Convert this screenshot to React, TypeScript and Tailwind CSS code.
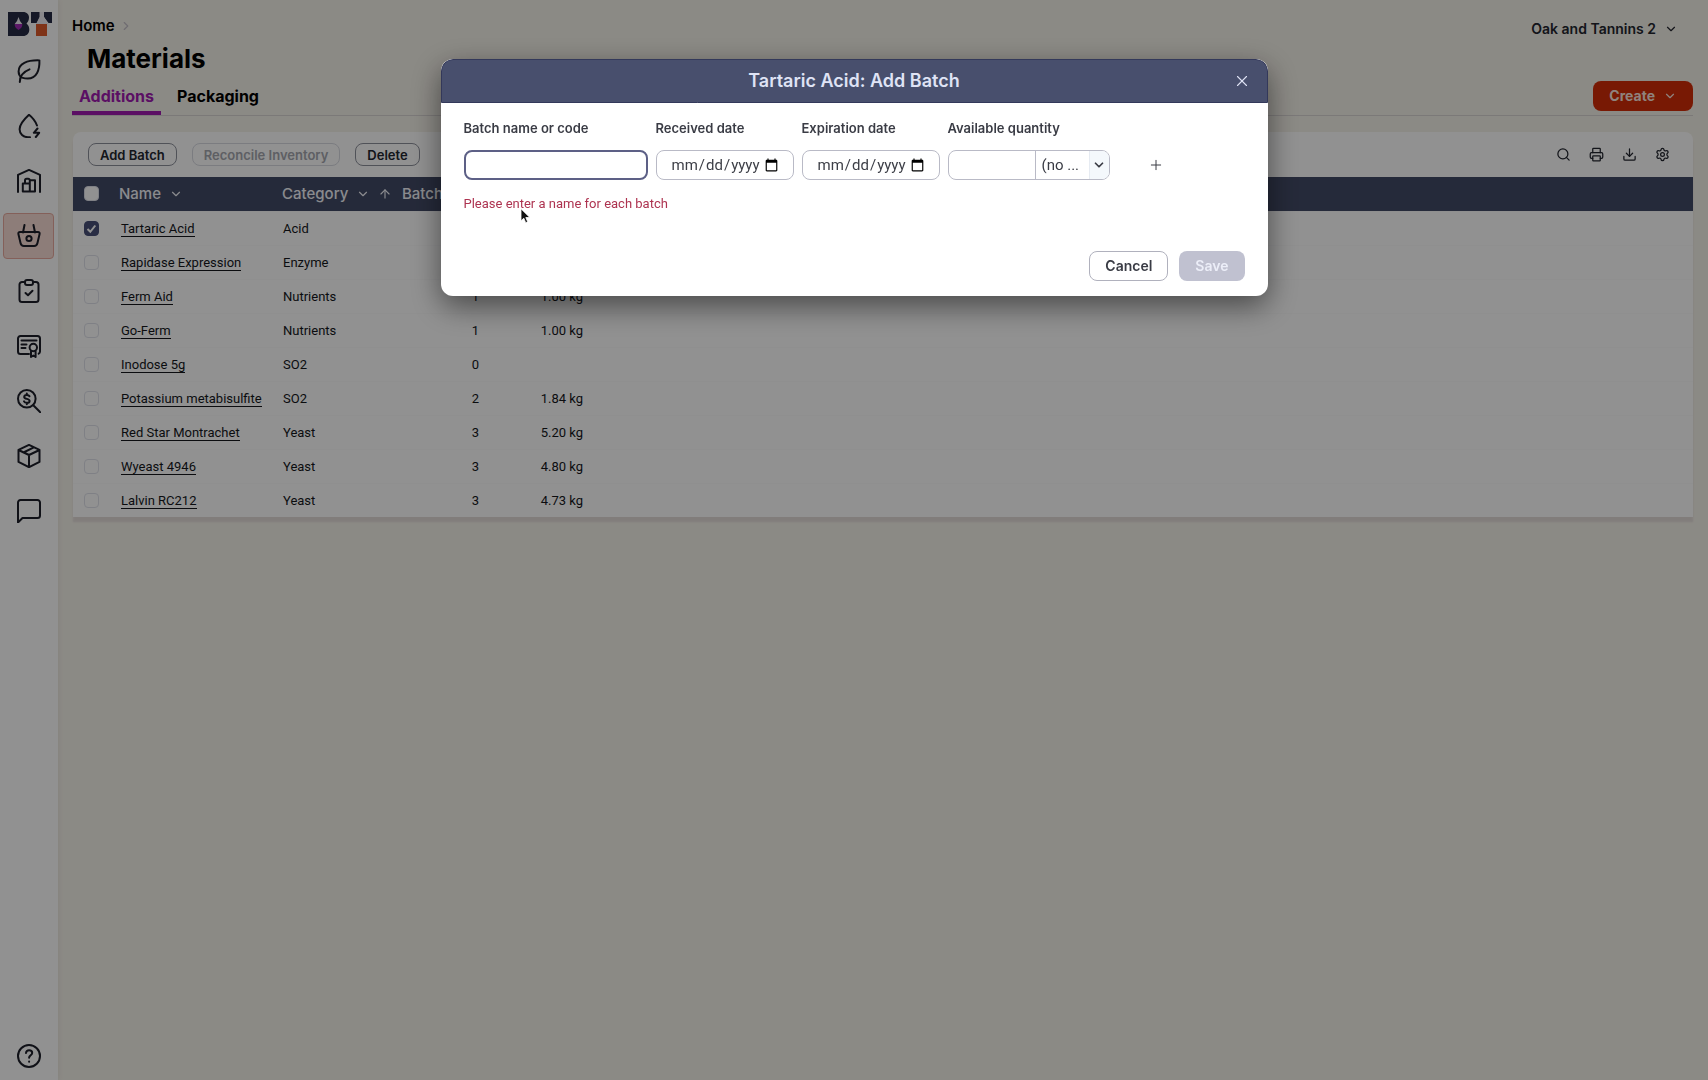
import type { ReactNode } from "react";
import { ArrowUp, ChevronDown, ChevronRight, Download, Plus, Printer, Search, Settings, X } from "lucide-react";

const iconProps = {
  width: 24,
  height: 24,
  viewBox: "0 0 24 24",
  fill: "none",
  stroke: "currentColor",
  strokeWidth: 2,
  strokeLinecap: "round" as const,
  strokeLinejoin: "round" as const,
};

const navItems: { label: string; icon: ReactNode; active?: boolean }[] = [
  {
    label: "Vineyard",
    icon: (
      <svg {...iconProps}>
        <path d="M22.4 1.4C10 1 1.6 4.8 1.6 12.4c0 2.9 1.3 4.9 3.3 6.2 6.9 2 12.5.3 15.2-4.6 2-3.8 2.5-8 2.3-12.6Z" />
        <path d="M2.8 23c0-6 3.6-10.2 9.7-12.6" />
      </svg>
    ),
  },
  {
    label: "Wine",
    icon: (
      <svg {...iconProps}>
        <path d="M20 11.5C18.5 7.5 14.5 2.8 12 .8 8.5 4 2.6 9.8 2.6 15.2c0 4.7 3.7 8 8.4 8h2" />
        <path d="m20.5 14.5-3.7 4.3h5.4l-3.4 4.2" />
      </svg>
    ),
  },
  {
    label: "Cellar",
    icon: (
      <svg {...iconProps}>
        <path d="M1 23V5.8L12 .9l11 4.9V23" />
        <path d="M5.8 22.5v-8h7v8ZM12.8 22.5V11.3H18v11.2ZM8 14.5v-3.2a1.6 1.6 0 0 1 1.6-1.6h1.6a1.6 1.6 0 0 1 1.6 1.6" />
      </svg>
    ),
  },
  {
    label: "Materials",
    active: true,
    icon: (
      <svg {...iconProps}>
        <path d="M3 8h18c1.3 0 1.9.9 1.6 2l-2.2 9.3c-.4 1.7-1.5 2.7-3.2 2.7H6.8c-1.7 0-2.8-1-3.2-2.7L1.4 10C1.1 8.9 1.7 8 3 8Z" />
        <path d="M7.5 1 6 8.5M16.5 1 18 8.5" />
        <circle cx="12" cy="14.5" r="2.6" />
      </svg>
    ),
  },
  {
    label: "Tasks",
    icon: (
      <svg {...iconProps}>
        <path d="M8 3H5a2.5 2.5 0 0 0-2.5 2.5v15A2.5 2.5 0 0 0 5 23h14a2.5 2.5 0 0 0 2.5-2.5v-15A2.5 2.5 0 0 0 19 3h-3" />
        <rect x="8" y="1" width="8" height="5" rx="2" />
        <path d="m8.5 14 2.5 2.3 4.5-4.6" />
      </svg>
    ),
  },
  {
    label: "Compliance",
    icon: (
      <svg {...iconProps}>
        <path d="M12 20H3.5A2.5 2.5 0 0 1 1 17.5v-13A2.5 2.5 0 0 1 3.5 2h17A2.5 2.5 0 0 1 23 4.500v13c0 1-.5 1.800-1.300 2.200" />
        <path d="M4.5 6.5h15M4.5 10.5h5M4.5 14h4" />
        <circle cx="16.3" cy="13.5" r="3.7" />
        <path d="M14 17.5V23l2.3-1.5 2.3 1.5v-5.5" />
      </svg>
    ),
  },
  {
    label: "Costs",
    icon: (
      <svg {...iconProps}>
        <circle cx="9.8" cy="9.8" r="8.8" />
        <path d="m16.3 16.3 7 7" />
        <path d="M12.5 7.3C12 6.3 11 6 9.8 6 8.3 6 7.2 6.7 7.2 7.9c0 2.7 5.4 1.2 5.4 4 0 1.2-1.2 1.9-2.7 1.9-1.3 0-2.4-.4-2.9-1.5M9.8 4.5V6M9.8 13.8v1.4" />
      </svg>
    ),
  },
  {
    label: "Inventory",
    icon: (
      <svg {...iconProps}>
        <path d="m12 .9 10.5 5v12L12 23.2 1.5 17.9v-12ZM12 23V11M1.5 6 12 11l10.5-5M6.5 8.5l10.3-5.2" />
      </svg>
    ),
  },
  {
    label: "Messages",
    icon: (
      <svg {...iconProps}>
        <path d="M1 23.5v-20A2.5 2.5 0 0 1 3.5 1h17A2.5 2.5 0 0 1 23 3.5v13a2.5 2.5 0 0 1-2.5 2.5h-15Z" />
      </svg>
    ),
  },
];

const rows = [
  { name: "Tartaric Acid", category: "Acid", batches: "", quantity: "", checked: true },
  { name: "Rapidase Expression", category: "Enzyme", batches: "", quantity: "" },
  { name: "Ferm Aid", category: "Nutrients", batches: "1", quantity: "1.00 kg" },
  { name: "Go-Ferm", category: "Nutrients", batches: "1", quantity: "1.00 kg" },
  { name: "Inodose 5g", category: "SO2", batches: "0", quantity: "" },
  { name: "Potassium metabisulfite", category: "SO2", batches: "2", quantity: "1.84 kg" },
  { name: "Red Star Montrachet", category: "Yeast", batches: "3", quantity: "5.20 kg" },
  { name: "Wyeast 4946", category: "Yeast", batches: "3", quantity: "4.80 kg" },
  { name: "Lalvin RC212", category: "Yeast", batches: "3", quantity: "4.73 kg" },
];

function Logo() {
  return (
    <svg width="44" height="24" viewBox="0 0 44 24">
      <path d="M0 0h15c4 0 6 2.5 6 5.5 0 2.5-1 4.5-2.5 6 1.8 1.3 2.8 3.5 2.8 6 0 4-2.5 6.5-6.3 6.5H0Z" fill="#262b45" />
      <path d="M10.5 5 12 9l2.3 3H6.7L9 9Z" fill="#f0eef5" />
      <path d="M6.7 12h7.6c.3 2.500-1.300 4.500-3.800 6-2.500-1.500-4.100-3.500-3.800-6Z" fill="#a02bb5" />
      <path d="M23 0h9v5l-3 6h-6ZM36 0h8v11h-3.500L36 5Z" fill="#262b45" />
      <path d="M31.5 0H36v5l4 7H28l3.5-7Z" fill="#f0eef5" />
      <path d="M28 12h11v12H28Z" fill="#e05a2b" />
    </svg>
  );
}

function Checkbox({ checked, label }: { checked?: boolean; label: string }) {
  return (
    <span className="relative flex size-[15px]">
      <input
        type="checkbox"
        defaultChecked={checked}
        aria-label={label}
        className="peer size-[15px] appearance-none rounded border border-[#dfe2ea] bg-white checked:border-[#485078] checked:bg-[#485078]"
      />
      <svg viewBox="0 0 15 15" fill="none" stroke="white" strokeWidth="2" className="pointer-events-none absolute inset-0 hidden peer-checked:block">
        <path d="m3.5 8 2.8 2.8 5-6.3" />
      </svg>
    </span>
  );
}

function Sidebar() {
  return (
    <aside className="flex w-[58px] shrink-0 flex-col items-center bg-white pr-px pb-3 text-[#1d1f2a] shadow-[0_0_6px_rgba(0,0,0,0.08)]">
      <a href="#" aria-label="Dashboard" className="mt-3 ml-[3px] mb-3">
        <Logo />
      </a>
      <nav className="flex flex-col gap-[9px]">
        {navItems.map((item) => (
          <a
            key={item.label}
            href="#"
            aria-label={item.label}
            className={
              item.active
                ? "flex h-[46px] w-[51px] items-center justify-center rounded border border-[#e8aa9e] bg-[#f8dcd5]"
                : "flex h-[46px] w-[51px] items-center justify-center"
            }
          >
            {item.icon}
          </a>
        ))}
      </nav>
      <a href="#" aria-label="Help" className="mt-auto">
        <svg {...iconProps}>
          <circle cx="12" cy="12" r="11" />
          <path d="M9 9c.2-1.8 1.4-2.8 3.1-2.8 1.8 0 3.1 1.1 3.1 2.7 0 2.2-3.1 2.5-3.1 4.8M12.1 17.5v.2" />
        </svg>
      </a>
    </aside>
  );
}

function MaterialsTable() {
  return (
    <section className="ml-px rounded-t-lg bg-white shadow-[0_5px_2px_rgba(110,80,110,0.13)]">
      <div className="flex h-[45px] items-center gap-[15px] px-[15px] text-[13px] leading-5 font-semibold text-[#23262f]">
        <button className="h-[23px] rounded-lg border border-[#8e919c] px-[11px]">Add Batch</button>
        <button disabled className="h-[23px] rounded-lg border border-[#d8dae2] px-[11px] text-[#a5a7af]">
          Reconcile Inventory
        </button>
        <button className="h-[23px] rounded-lg border border-[#8e919c] px-[11px]">Delete</button>
        <div className="ml-auto flex gap-[18px] pr-2">
          <button aria-label="Search"><Search size={15} /></button>
          <button aria-label="Print"><Printer size={15} /></button>
          <button aria-label="Download"><Download size={15} /></button>
          <button aria-label="Settings"><Settings size={15} /></button>
        </div>
      </div>
      <table className="w-full table-fixed font-[Roboto,sans-serif] text-[13px] text-[#14161c]">
        <thead>
          <tr className="h-[34px] bg-[#424a66] text-left font-[Inter,sans-serif] text-[15px] text-[#f3f4fa]">
            <th className="w-[46px] pl-[11px]"><Checkbox label="Select all" /></th>
            <th className="w-[163px] font-medium">
              <span className="flex items-center gap-2">Name <ChevronDown size={14} /></span>
            </th>
            <th className="w-[120px] font-medium">
              <span className="flex items-center gap-2">
                Category <ChevronDown size={14} /> <ArrowUp size={14} />
              </span>
            </th>
            <th className="w-[77px] font-medium">Batches</th>
            <th className="w-[104px] font-medium" />
            <th />
          </tr>
        </thead>
        <tbody>
          {rows.map((row) => (
            <tr key={row.name} className="h-[34px] border-t border-[#fbfbfc]">
              <td className="pt-px pl-[11px]"><Checkbox checked={row.checked} label={row.name} /></td>
              <td className="pt-px pl-[2px]">
                <a href="#" className="border-b border-current">{row.name}</a>
              </td>
              <td className="pt-px pl-px">{row.category}</td>
              <td className="pt-px text-right">{row.batches}</td>
              <td className="pt-px text-right">{row.quantity}</td>
              <td />
            </tr>
          ))}
        </tbody>
      </table>
    </section>
  );
}

const dateField =
  "h-[30px] w-[138px] rounded-lg border border-[#b9bac6] bg-white px-[14px] font-[Roboto,sans-serif] text-[15px] font-normal text-[#3d3f47] [&::-webkit-calendar-picker-indicator]:ml-0 [&::-webkit-calendar-picker-indicator]:p-0";

function AddBatchDialog() {
  return (
    <div className="fixed inset-0 flex items-start justify-center bg-black/43 pt-[59px]">
      <div role="dialog" aria-labelledby="dialog-title" className="w-full max-w-[827px] overflow-hidden rounded-xl bg-white text-[#3a3c45] shadow-[0_10px_30px_rgba(0,0,0,0.5)]">
        <header className="relative flex h-11 items-center justify-center rounded-t-xl border border-[#33385a] bg-[#484f6d]">
          <h2 id="dialog-title" className="text-lg font-semibold text-[#dfe3f5]">Tartaric Acid: Add Batch</h2>
          <button aria-label="Close" className="absolute right-4 text-[#dfe3f5]">
            <X size={18} strokeWidth={1.5} />
          </button>
        </header>
        <form className="px-[23px] py-[15px]">
          <div className="flex gap-2 text-[13px] font-semibold">
            <div className="flex w-[184px] flex-col gap-3">
              <label htmlFor="batch-name" className="leading-5">Batch name or code</label>
              <input id="batch-name" type="text" className="h-[30px] rounded-lg border-2 border-[#5d6086] px-2 outline-none" />
            </div>
            <div className="flex flex-col gap-3">
              <label htmlFor="received" className="leading-5">Received date</label>
              <input id="received" type="date" className={dateField} />
            </div>
            <div className="flex flex-col gap-3">
              <label htmlFor="expires" className="leading-5">Expiration date</label>
              <input id="expires" type="date" className={dateField} />
            </div>
            <div className="flex flex-col gap-3">
              <label htmlFor="quantity" className="leading-5">Available quantity</label>
              <div className="flex h-[30px] w-[162px] overflow-hidden rounded-lg border border-[#b9bac6]">
                <input id="quantity" type="text" className="w-[87px] border-r border-[#b9bac6] px-2 outline-none" />
                <div className="relative flex-1">
                  <select aria-label="Unit" className="h-full w-full appearance-none pl-[6px] font-[Roboto,sans-serif] text-[15px] font-normal outline-none">
                    <option>(no ...</option>
                  </select>
                  <span className="pointer-events-none absolute inset-y-0 right-0 flex w-5 items-center justify-center border-l border-[#e6ebf2] bg-[#f4f8fc]">
                    <ChevronDown size={14} strokeWidth={3} />
                  </span>
                </div>
              </div>
            </div>
            <button type="button" aria-label="Add row" className="mt-8 ml-7 flex h-[30px] w-5 items-center justify-center">
              <Plus size={16} strokeWidth={1.5} />
            </button>
          </div>
          <p className="relative mt-[14px] font-[Roboto,sans-serif] text-[13px] leading-5 text-[#ad3350]">
            Please enter a name for each batch
            <svg width="12" height="16" viewBox="0 0 12 16" className="absolute top-[14px] left-[56px]">
              <path d="M1 .8v12l2.8-2.6 1.9 4.5 2-.9-1.9-4.3h4Z" fill="#111" stroke="#fff" strokeWidth=".8" />
            </svg>
          </p>
          <div className="mt-[37px] flex justify-end gap-[11px] text-sm font-semibold">
            <button type="button" className="h-[30px] rounded-lg border border-[#b0b1bd] px-[15px]">Cancel</button>
            <button type="submit" disabled className="h-[30px] rounded-lg bg-[#c0c1d0] px-4 text-[#eceef8]">Save</button>
          </div>
        </form>
      </div>
    </div>
  );
}

export default function App() {
  return (
    <div className="flex min-h-screen bg-[#f5f2ea] font-[Inter,sans-serif] text-black">
      <Sidebar />
      <main className="flex-1 pr-[15px] pl-[14px]">
        <div className="flex items-start justify-between">
          <div>
            <a href="#" className="mt-4 flex items-center gap-1 text-[15px] leading-5 font-semibold">
              Home <ChevronRight size={14} className="text-[#c3bfc8]" />
            </a>
            <h1 className="mt-[5px] ml-[15px] text-[26px] leading-9 font-bold">Materials</h1>
          </div>
          <button className="mt-[17px] mr-[15px] flex items-center gap-2 text-sm leading-6 font-semibold text-[#23262f]">
            Oak and Tannins 2 <ChevronDown size={14} />
          </button>
        </div>
        <div className="mb-4 flex h-[39px] items-start justify-between border-b border-[#d9d5d4]">
          <nav className="flex h-[38px] font-bold">
            <a href="#" className="flex items-center border-b-4 border-[#a01bb0] px-[7px] pt-1 text-[#a01bb0]">Additions</a>
            <a href="#" className="flex items-center border-b-4 border-transparent px-4 pt-1">Packaging</a>
          </nav>
          <button className="mt-1 flex h-[30px] items-center gap-2 rounded-lg bg-[#d42d08] px-4 text-sm font-bold text-[#fbe6df]">
            Create <ChevronDown size={14} />
          </button>
        </div>
        <MaterialsTable />
      </main>
      <AddBatchDialog />
    </div>
  );
}
